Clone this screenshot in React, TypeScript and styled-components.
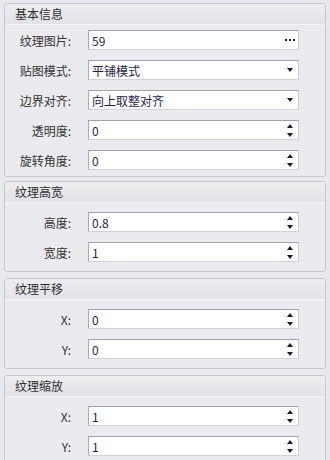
import { FC } from "react";
import styled, { createGlobalStyle } from "styled-components";

const GlobalStyle = createGlobalStyle`
  body {
    margin: 0;
    background: #e9e9ed;
    font-family: "Noto Sans CJK SC", "Noto Sans", sans-serif;
    font-size: 12px;
    color: #333;
  }
`;

type FieldKind = "text" | "file" | "select" | "spin";

type FieldDef = {
  label: string;
  value: string;
  kind: FieldKind;
};

type GroupDef = {
  title: string;
  compact?: boolean;
  fields: FieldDef[];
};

const groups: GroupDef[] = [
  {
    title: "基本信息",
    compact: true,
    fields: [
      { label: "纹理图片:", value: "59", kind: "file" },
      { label: "贴图模式:", value: "平铺模式", kind: "select" },
      { label: "边界对齐:", value: "向上取整对齐", kind: "select" },
      { label: "透明度:", value: "0", kind: "spin" },
      { label: "旋转角度:", value: "0", kind: "spin" },
    ],
  },
  {
    title: "纹理高宽",
    fields: [
      { label: "高度:", value: "0.8", kind: "spin" },
      { label: "宽度:", value: "1", kind: "spin" },
    ],
  },
  {
    title: "纹理平移",
    fields: [
      { label: "X:", value: "0", kind: "spin" },
      { label: "Y:", value: "0", kind: "spin" },
    ],
  },
  {
    title: "纹理缩放",
    fields: [
      { label: "X:", value: "1", kind: "spin" },
      { label: "Y:", value: "1", kind: "spin" },
    ],
  },
];

//ヘルパー部品
const FieldButton: FC<{ kind: FieldKind }> = ({ kind }) => {
  if (kind === "file") {
    return (
      <Dots>
        <i />
        <i />
        <i />
      </Dots>
    );
  }
  if (kind === "select") return <Caret $dir="down" />;
  if (kind === "spin") {
    return (
      <Spin>
        <Caret $dir="up" />
        <Caret $dir="down" />
      </Spin>
    );
  }
  return null;
};

export default function App() {
  return (
    <>
      <GlobalStyle />
      <Page>
        {groups.map((g) => (
          <Panel key={g.title} $compact={g.compact}>
            <PanelHeader>{g.title}</PanelHeader>
            <PanelBody $compact={g.compact}>
              {g.fields.map((f) => (
                <Row key={g.title + f.label}>
                  <Label>{f.label}</Label>
                  <Field>
                    <Value>{f.value}</Value>
                    <FieldButton kind={f.kind} />
                  </Field>
                </Row>
              ))}
            </PanelBody>
          </Panel>
        ))}
      </Page>
    </>
  );
}

//Style
const Page = styled.div`
  display: flex;
  flex-direction: column;
  padding: 3px 4px 0 4px;
`;

const Panel = styled.section<{ $compact?: boolean }>`
  border: 1px solid #c6c6cc;
  border-radius: 3px;
  background: #ebebef;
  margin-bottom: ${(p) => (p.$compact ? "4px" : "6px")};
  overflow: hidden;
`;

const PanelHeader = styled.div`
  height: 20px;
  line-height: 20px;
  padding-left: 10px;
  font-size: 12px;
  color: #2e2e2e;
  background: linear-gradient(#eeeef1, #e2e2e7);
  border-bottom: 1px solid #f5f5f7;
`;

const PanelBody = styled.div<{ $compact?: boolean }>`
  display: flex;
  flex-direction: column;
  gap: 10px;
  padding: ${(p) => (p.$compact ? "5px 0 6px" : "9px 0 9px")};
`;

const Row = styled.div`
  display: grid;
  grid-template-columns: 66px 211px;
  column-gap: 17px;
  align-items: center;
`;

const Label = styled.span`
  text-align: right;
  font-size: 12px;
  color: #333;
  white-space: nowrap;
`;

const Field = styled.div`
  box-sizing: border-box;
  height: 20px;
  display: flex;
  align-items: center;
  justify-content: space-between;
  padding: 0 5px 0 3px;
  background: #fff;
  border: 1px solid;
  border-color: #a2a2aa #cacad0 #d2d2d6 #aaaab2;
`;

const Value = styled.span`
  font-size: 12px;
  color: #1e1e4a;
  white-space: nowrap;
`;

const Dots = styled.span`
  display: flex;
  gap: 2px;
  margin-right: -2px;
  i {
    width: 2px;
    height: 2px;
    background: #222;
  }
`;

const Spin = styled.span`
  display: flex;
  flex-direction: column;
  gap: 5px;
`;

const Caret = styled.span<{ $dir: "up" | "down" }>`
  width: 0;
  height: 0;
  border-left: 3.5px solid transparent;
  border-right: 3.5px solid transparent;
  ${(p) =>
    p.$dir === "down"
      ? "border-top: 4px solid #1a1a2a;"
      : "border-bottom: 4px solid #1a1a2a;"}
`;
